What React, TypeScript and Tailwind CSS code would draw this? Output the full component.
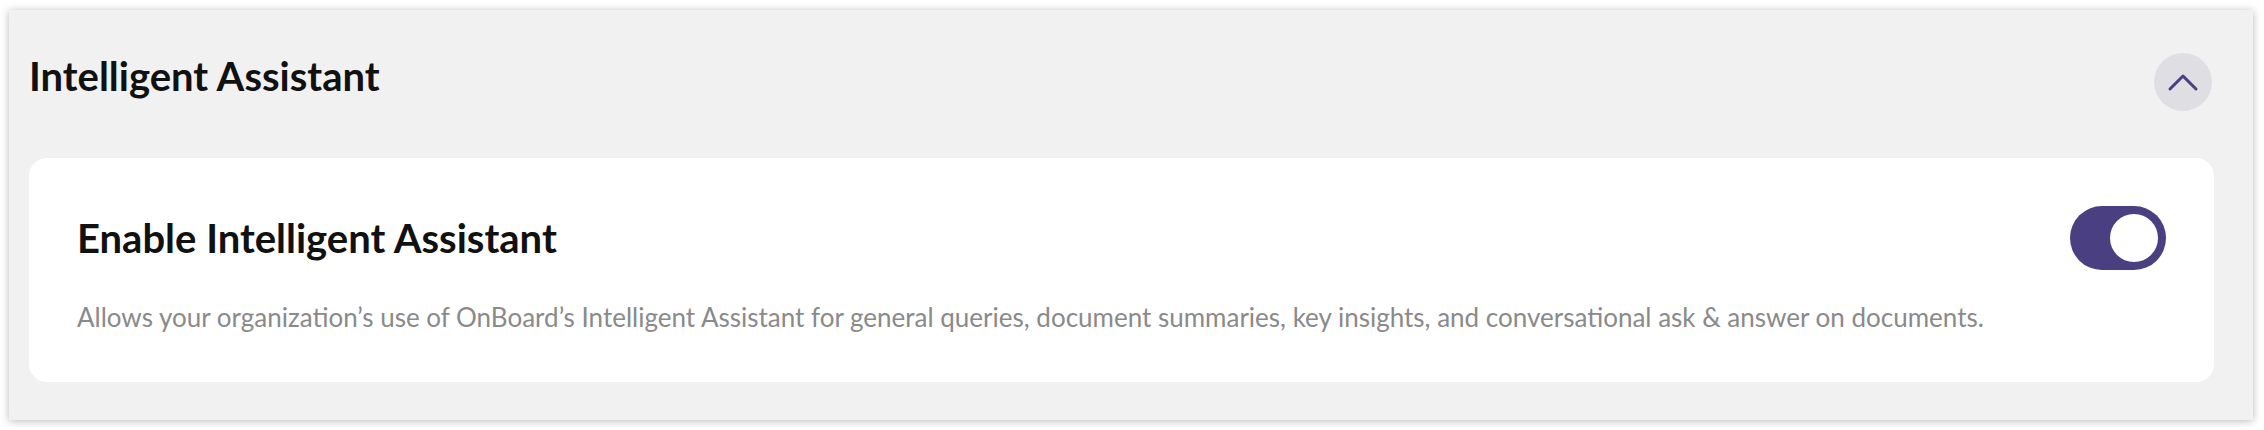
import React from "react";

export default function App() {
  return (
    <div className="w-[2264px] h-[430px] bg-white pt-[10px] pl-[9px]" style={{ fontFamily: "Lato, 'Noto Sans', sans-serif" }}>
      <div className="w-[2244px] h-[410px] bg-[#f1f1f1] shadow-[0_1px_8px_rgba(0,0,0,0.28)] pl-[20px] pr-[39px] pt-[43px]">
        <div className="flex items-start justify-between">
          <h2 className="text-[40px] leading-[47px] font-bold text-[#111111]">Intelligent Assistant</h2>
          <button className="w-[58px] h-[58px] mr-[2px] rounded-full bg-[#dfdfe3] flex items-center justify-center">
            <svg width="32" height="19" viewBox="0 0 32 19" fill="none">
              <path d="M3 16 L16 3 L29 16" stroke="#4a4081" strokeWidth="3" strokeLinecap="round" strokeLinejoin="round" />
            </svg>
          </button>
        </div>
        <div className="mt-[47px] bg-white rounded-[18px] pt-[48px] pl-[48px] pr-[48px] pb-[49px]">
          <div className="flex items-center justify-between h-[64px]">
            <div className="text-[40px] leading-[45px] font-bold text-[#111111]">Enable Intelligent Assistant</div>
            <div className="w-[96px] h-[64px] rounded-full bg-[#4a4081] flex items-center justify-end pr-[8px]">
              <div className="w-[48px] h-[48px] rounded-full bg-white" />
            </div>
          </div>
          <p className="mt-[32px] text-[26px] leading-[31px] text-[#8a8a8a]">
            Allows your organization’s use of OnBoard’s Intelligent Assistant for general queries, document summaries, key insights, and conversational ask &amp; answer on documents.
          </p>
        </div>
      </div>
    </div>
  );
}
